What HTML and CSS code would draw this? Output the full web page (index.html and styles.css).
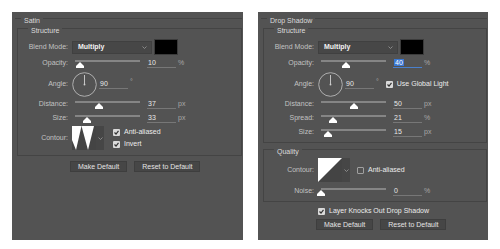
FILE: index.html
```html
<!DOCTYPE html>
<html lang="en">
<head>
    <meta charset="UTF-8">
    <title>Layer Style</title>
    <link rel="stylesheet" href="styles.css">
</head>
<body>
    <div class="dialogs">
        <!-- Satin -->
        <section class="panel">
            <div class="group group-outer">
                <div class="group-title">Satin</div>
                <div class="group group-box satin-box">
                    <div class="group-title">Structure</div>
                    <div class="row row-blend">
                        <span class="label">Blend Mode:</span>
                        <div class="select"><span>Multiply</span><svg width="5" height="3" viewBox="0 0 5 3"><polyline points="0.5,0.5 2.5,2.5 4.5,0.5" fill="none" stroke="#9a9a9a" stroke-width="0.8"/></svg></div>
                        <div class="swatch"></div>
                    </div>
                    <div class="row row-opacity">
                        <span class="label">Opacity:</span>
                        <div class="slider"><span class="thumb" style="left: 8%"><svg width="8" height="6" viewBox="0 0 8 6"><polygon points="4,0 8,4 8,6 0,6 0,4" fill="#fff"/></svg></span></div>
                        <span class="field">10</span>
                        <span class="unit">%</span>
                    </div>
                    <div class="row row-angle">
                        <span class="label">Angle:</span>
                        <svg class="dial" width="25" height="25" viewBox="0 0 25 25"><circle cx="12.5" cy="12.5" r="11.8" fill="none" stroke="#b8b8b8" stroke-width="0.9"/><line x1="12.5" y1="12.5" x2="12.5" y2="3" stroke="#d0d0d0" stroke-width="0.9"/><circle cx="12.5" cy="12.5" r="0.9" fill="#d0d0d0"/></svg>
                        <span class="field field-angle">90</span>
                        <span class="unit unit-deg">°</span>
                    </div>
                    <div class="row row-slider">
                        <span class="label">Distance:</span>
                        <div class="slider"><span class="thumb" style="left: 37%"><svg width="8" height="6" viewBox="0 0 8 6"><polygon points="4,0 8,4 8,6 0,6 0,4" fill="#fff"/></svg></span></div>
                        <span class="field">37</span>
                        <span class="unit">px</span>
                    </div>
                    <div class="row row-slider">
                        <span class="label">Size:</span>
                        <div class="slider"><span class="thumb" style="left: 18%"><svg width="8" height="6" viewBox="0 0 8 6"><polygon points="4,0 8,4 8,6 0,6 0,4" fill="#fff"/></svg></span></div>
                        <span class="field">33</span>
                        <span class="unit">px</span>
                    </div>
                    <div class="row row-contour">
                        <span class="label">Contour:</span>
                        <div class="contour">
                            <svg width="24" height="24" viewBox="0 0 24 24"><rect width="24" height="24" fill="#444"/><polygon points="0,0 9.5,0 4,24 0,14" fill="#fff"/><polygon points="9.5,0 22,0 16,24" fill="#fff"/></svg>
                            <div class="contour-arrow"><svg width="5" height="3" viewBox="0 0 5 3"><polyline points="0.5,0.5 2.5,2.5 4.5,0.5" fill="none" stroke="#9a9a9a" stroke-width="0.8"/></svg></div>
                        </div>
                        <div class="checks">
                            <label class="check-label"><span class="checkbox checked"><svg width="7" height="7" viewBox="0 0 7 7"><polyline points="1.5,3.5 3,5 5.5,1.8" fill="none" stroke="#333" stroke-width="1.2"/></svg></span>Anti-aliased</label>
                            <label class="check-label"><span class="checkbox checked"><svg width="7" height="7" viewBox="0 0 7 7"><polyline points="1.5,3.5 3,5 5.5,1.8" fill="none" stroke="#333" stroke-width="1.2"/></svg></span>Invert</label>
                        </div>
                    </div>
                </div>
            </div>
            <div class="buttons buttons-satin">
                <button class="btn">Make Default</button>
                <button class="btn">Reset to Default</button>
            </div>
        </section>

        <!-- Drop Shadow -->
        <section class="panel panel-right">
            <div class="group group-outer">
                <div class="group-title">Drop Shadow</div>
                <div class="group group-box shadow-box">
                    <div class="group-title">Structure</div>
                    <div class="row row-blend">
                        <span class="label">Blend Mode:</span>
                        <div class="select"><span>Multiply</span><svg width="5" height="3" viewBox="0 0 5 3"><polyline points="0.5,0.5 2.5,2.5 4.5,0.5" fill="none" stroke="#9a9a9a" stroke-width="0.8"/></svg></div>
                        <div class="swatch"></div>
                    </div>
                    <div class="row row-opacity">
                        <span class="label">Opacity:</span>
                        <div class="slider"><span class="thumb" style="left: 38%"><svg width="8" height="6" viewBox="0 0 8 6"><polygon points="4,0 8,4 8,6 0,6 0,4" fill="#fff"/></svg></span></div>
                        <span class="field field-focus"><span class="selected">40</span></span>
                        <span class="unit">%</span>
                    </div>
                    <div class="row row-angle">
                        <span class="label">Angle:</span>
                        <svg class="dial" width="25" height="25" viewBox="0 0 25 25"><circle cx="12.5" cy="12.5" r="11.8" fill="none" stroke="#b8b8b8" stroke-width="0.9"/><line x1="12.5" y1="12.5" x2="12.5" y2="3" stroke="#d0d0d0" stroke-width="0.9"/><circle cx="12.5" cy="12.5" r="0.9" fill="#d0d0d0"/></svg>
                        <span class="field field-angle">90</span>
                        <span class="unit unit-deg">°</span>
                        <label class="check-label global"><span class="checkbox checked"><svg width="7" height="7" viewBox="0 0 7 7"><polyline points="1.5,3.5 3,5 5.5,1.8" fill="none" stroke="#333" stroke-width="1.2"/></svg></span>Use Global Light</label>
                    </div>
                    <div class="row row-slider">
                        <span class="label">Distance:</span>
                        <div class="slider"><span class="thumb" style="left: 50%"><svg width="8" height="6" viewBox="0 0 8 6"><polygon points="4,0 8,4 8,6 0,6 0,4" fill="#fff"/></svg></span></div>
                        <span class="field">50</span>
                        <span class="unit">px</span>
                    </div>
                    <div class="row row-slider">
                        <span class="label">Spread:</span>
                        <div class="slider"><span class="thumb" style="left: 18%"><svg width="8" height="6" viewBox="0 0 8 6"><polygon points="4,0 8,4 8,6 0,6 0,4" fill="#fff"/></svg></span></div>
                        <span class="field">21</span>
                        <span class="unit">%</span>
                    </div>
                    <div class="row row-slider">
                        <span class="label">Size:</span>
                        <div class="slider"><span class="thumb" style="left: 11%"><svg width="8" height="6" viewBox="0 0 8 6"><polygon points="4,0 8,4 8,6 0,6 0,4" fill="#fff"/></svg></span></div>
                        <span class="field">15</span>
                        <span class="unit">px</span>
                    </div>
                </div>
                <div class="group group-box quality-box">
                    <div class="group-title">Quality</div>
                    <div class="row row-contour">
                        <span class="label">Contour:</span>
                        <div class="contour">
                            <svg width="24" height="24" viewBox="0 0 24 24"><rect width="24" height="24" fill="#444"/><polygon points="0,0 24,0 0,24" fill="#fff"/></svg>
                            <div class="contour-arrow"><svg width="5" height="3" viewBox="0 0 5 3"><polyline points="0.5,0.5 2.5,2.5 4.5,0.5" fill="none" stroke="#9a9a9a" stroke-width="0.8"/></svg></div>
                        </div>
                        <div class="checks checks-single">
                            <label class="check-label"><span class="checkbox"></span>Anti-aliased</label>
                        </div>
                    </div>
                    <div class="row row-slider row-noise">
                        <span class="label">Noise:</span>
                        <div class="slider"><span class="thumb" style="left: 0%"><svg width="8" height="6" viewBox="0 0 8 6"><polygon points="4,0 8,4 8,6 0,6 0,4" fill="#fff"/></svg></span></div>
                        <span class="field">0</span>
                        <span class="unit">%</span>
                    </div>
                </div>
            </div>
            <div class="knockout">
                <label class="check-label"><span class="checkbox checked"><svg width="7" height="7" viewBox="0 0 7 7"><polyline points="1.5,3.5 3,5 5.5,1.8" fill="none" stroke="#333" stroke-width="1.2"/></svg></span>Layer Knocks Out Drop Shadow</label>
            </div>
            <div class="buttons buttons-shadow">
                <button class="btn">Make Default</button>
                <button class="btn">Reset to Default</button>
            </div>
        </section>
    </div>
</body>
</html>
```

FILE: styles.css
```css
body {
    margin: 12px;
    background-color: #fff;
    font-family: "Liberation Sans", Arial, sans-serif;
    font-size: 7px;
    line-height: 8px;
    color: #c2c2c2;
}

.dialogs {
    display: flex;
    gap: 15px;
}

.panel {
    width: 231px;
    height: 228px;
    padding-top: 6px;
    box-sizing: border-box;
    background-color: #535353;
}

.panel-right {
    width: 230px;
}

/* group boxes */
.group {
    border-top: 1px solid #444;
}

.group-outer {
    margin: 0 1px 0 3px;
}

.group-box {
    margin: 3px 0 0 2px;
    border: 1px solid #444;
}

.group-title {
    width: fit-content;
    height: 8px;
    margin: -2px 0 0 6px;
    padding: 0 3px;
    background-color: #535353;
    color: #dcdcdc;
}

.group-box > .group-title {
    margin-left: 10px;
}

.satin-box {
    padding-bottom: 5px;
}

.shadow-box {
    padding-bottom: 3px;
}

.quality-box {
    margin-top: 6px;
    padding-bottom: 3px;
}

/* rows */
.row {
    display: flex;
    align-items: center;
}

.label {
    flex: none;
    width: 50px;
    margin-right: 4px;
    text-align: right;
}

.row-blend {
    height: 16px;
    margin-top: 4px;
}

.row-opacity {
    height: 16px;
}

.row-angle {
    height: 26px;
}

.row-slider {
    height: 14px;
}

.row-contour {
    height: 24px;
    margin-top: 1px;
}

.quality-box .row-contour {
    margin-top: 2px;
}

.row-noise {
    margin-top: 2px;
}

.select {
    display: flex;
    align-items: center;
    justify-content: space-between;
    width: 80px;
    height: 13px;
    padding: 0 4px 0 5px;
    box-sizing: border-box;
    background-color: #474747;
    border: 1px solid #404040;
    color: #f2f2f2;
    font-weight: bold;
}

.swatch {
    width: 24px;
    height: 16px;
    margin-left: 2px;
    box-sizing: border-box;
    background-color: #000;
    border: 1px solid #3b3b3b;
}

/* sliders */
.slider {
    position: relative;
    flex: none;
    width: 65px;
    height: 10px;
    margin: 0 7px 0 3px;
}

.slider::before {
    content: "";
    position: absolute;
    top: 2px;
    left: 0;
    right: 0;
    height: 2px;
    background-color: #858585;
}

.thumb {
    position: absolute;
    top: 4px;
    width: 8px;
    height: 6px;
    margin-left: -4px;
    display: flex;
}

.field {
    flex: none;
    width: 28px;
    height: 9px;
    line-height: 9px;
    padding-left: 1px;
    box-sizing: border-box;
    border-bottom: 1px solid #777;
    color: #e8e8e8;
    box-sizing: content-box;
}

.field-focus {
    border-bottom-color: #4a80cc;
}

.selected {
    background-color: #3a78d4;
    color: #fff;
    padding: 0 1px;
}

.unit {
    margin-left: 2px;
    color: #a8a8a8;
}

.dial {
    flex: none;
}

.field-angle {
    margin-left: 2px;
}

.unit-deg {
    margin-top: -4px;
}

/* checkboxes */
.check-label {
    display: flex;
    align-items: center;
    gap: 4px;
    height: 10px;
    color: #ececec;
}

.checkbox {
    display: flex;
    flex: none;
    width: 7px;
    height: 7px;
    box-sizing: border-box;
    border: 1px solid #a0a0a0;
    border-radius: 1px;
}

.checkbox.checked {
    border: none;
    background-color: #dadada;
}

.global {
    margin-left: 7px;
}

/* contour picker */
.contour {
    display: flex;
}

.contour-arrow {
    display: flex;
    align-items: center;
    justify-content: center;
    width: 8px;
    height: 24px;
    background-color: #464646;
}

.checks {
    display: flex;
    flex-direction: column;
    gap: 2px;
    margin-left: 9px;
}

.checks-single {
    margin-left: 7px;
}

/* bottom area */
.knockout {
    margin-top: 4px;
    padding-left: 60px;
}

.buttons {
    display: flex;
    gap: 7px;
    padding-left: 58px;
}

.buttons-satin {
    margin-top: 5px;
}

.buttons-shadow {
    margin-top: 3px;
}

.btn {
    height: 11px;
    padding: 0 7px;
    font-family: inherit;
    font-size: 7px;
    line-height: 9px;
    color: #e4e4e4;
    background-color: #464646;
    border: 1px solid #3e3e3e;
}
```
